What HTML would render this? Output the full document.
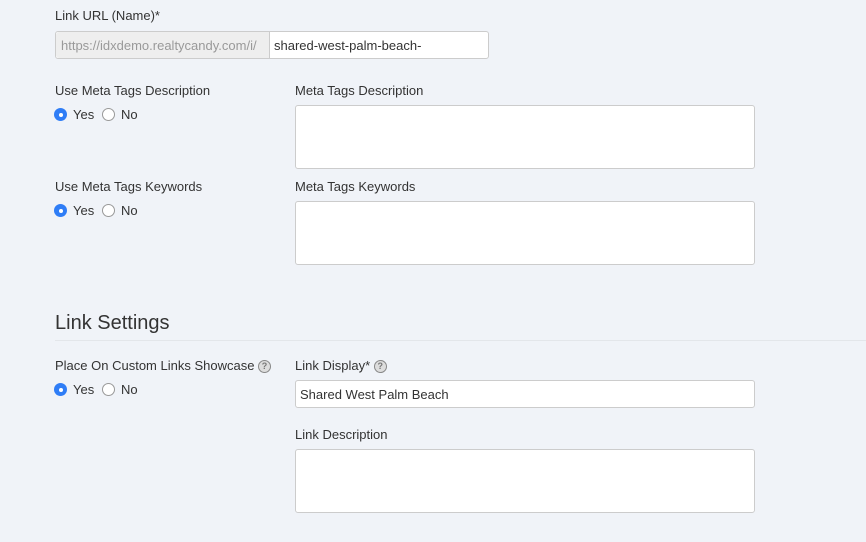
<!DOCTYPE html>
<html><head><style>
body{margin:0;width:866px;height:542px;background:#f0f3f8;font-family:"Liberation Sans",sans-serif;color:#333;font-size:13px;position:relative;overflow:hidden}
.a{position:absolute;white-space:nowrap}
.box{position:absolute;background:#fff;border:1px solid #ccc;border-radius:3px;box-sizing:border-box}
.r{position:absolute;width:13px;height:13px;border-radius:50%;box-sizing:border-box}
.on{background:#2f7df6}
.on:after{content:"";position:absolute;left:4.5px;top:4.5px;width:4px;height:4px;border-radius:50%;background:#fff}
.off{background:#fff;border:1px solid #999}
.q{display:inline-block;width:13px;height:13px;border-radius:50%;background:#ddd;color:#777;font-size:9px;text-align:center;line-height:11px;border:1px solid #888;box-sizing:border-box;vertical-align:1px;font-weight:bold}
</style></head><body>
<div class="a" style="left:55px;top:8px">Link URL (Name)*</div>
<div class="box" style="left:55px;top:31px;width:434px;height:28px"></div>
<div class="a" style="left:56px;top:32px;width:213px;height:26px;background:#eee;border-right:1px solid #ccc;border-radius:3px 0 0 3px"></div>
<div class="a" style="left:61px;top:38px;color:#999">https://idxdemo.realtycandy.com/i/</div>
<div class="a" style="left:274px;top:38px">shared-west-palm-beach-</div>

<div class="a" style="left:55px;top:83px">Use Meta Tags Description</div>
<div class="r on" style="left:54px;top:108px"></div><div class="a" style="left:73px;top:107px">Yes</div>
<div class="r off" style="left:102px;top:108px"></div><div class="a" style="left:121px;top:107px">No</div>
<div class="a" style="left:295px;top:83px">Meta Tags Description</div>
<div class="box" style="left:295px;top:105px;width:460px;height:64px"></div>

<div class="a" style="left:55px;top:179px">Use Meta Tags Keywords</div>
<div class="r on" style="left:54px;top:204px"></div><div class="a" style="left:73px;top:203px">Yes</div>
<div class="r off" style="left:102px;top:204px"></div><div class="a" style="left:121px;top:203px">No</div>
<div class="a" style="left:295px;top:179px">Meta Tags Keywords</div>
<div class="box" style="left:295px;top:201px;width:460px;height:64px"></div>

<div class="a" style="left:55px;top:312px;font-size:20px">Link Settings</div>
<div class="a" style="left:55px;top:340px;width:811px;height:1px;background:#e3e6ea"></div>

<div class="a" style="left:55px;top:358px">Place On Custom Links Showcase <span class="q">?</span></div>
<div class="r on" style="left:54px;top:383px"></div><div class="a" style="left:73px;top:382px">Yes</div>
<div class="r off" style="left:102px;top:383px"></div><div class="a" style="left:121px;top:382px">No</div>
<div class="a" style="left:295px;top:358px">Link Display* <span class="q">?</span></div>
<div class="box" style="left:295px;top:380px;width:460px;height:28px"></div>
<div class="a" style="left:300px;top:387px">Shared West Palm Beach</div>
<div class="a" style="left:295px;top:427px">Link Description</div>
<div class="box" style="left:295px;top:449px;width:460px;height:64px"></div>
</body></html>
